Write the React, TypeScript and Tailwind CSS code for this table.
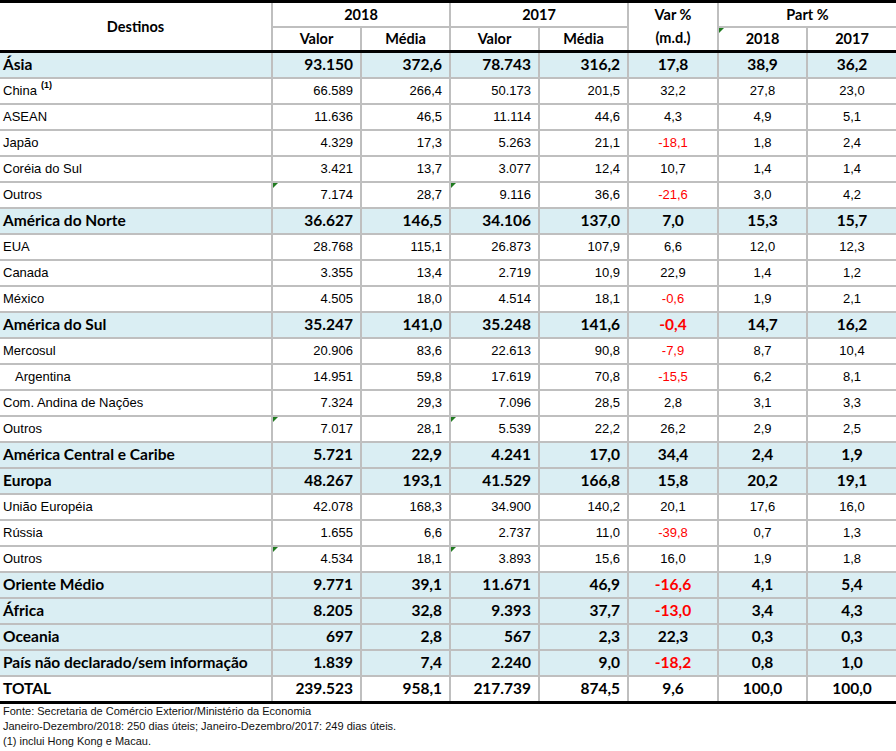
import React from 'react';

type Kind = 'group' | 'item' | 'sub' | 'total';
type Row = { label: string; kind: Kind; cells: string[]; sup?: string; flags?: number[] };

const ROWS: Row[] = [
  { label: 'Ásia', kind: 'group', cells: ['93.150', '372,6', '78.743', '316,2', '17,8', '38,9', '36,2'] },
  { label: 'China', sup: '(1)', kind: 'item', cells: ['66.589', '266,4', '50.173', '201,5', '32,2', '27,8', '23,0'] },
  { label: 'ASEAN', kind: 'item', cells: ['11.636', '46,5', '11.114', '44,6', '4,3', '4,9', '5,1'] },
  { label: 'Japão', kind: 'item', cells: ['4.329', '17,3', '5.263', '21,1', '-18,1', '1,8', '2,4'] },
  { label: 'Coréia do Sul', kind: 'item', cells: ['3.421', '13,7', '3.077', '12,4', '10,7', '1,4', '1,4'] },
  { label: 'Outros', kind: 'item', flags: [0, 2], cells: ['7.174', '28,7', '9.116', '36,6', '-21,6', '3,0', '4,2'] },
  { label: 'América do Norte', kind: 'group', cells: ['36.627', '146,5', '34.106', '137,0', '7,0', '15,3', '15,7'] },
  { label: 'EUA', kind: 'item', cells: ['28.768', '115,1', '26.873', '107,9', '6,6', '12,0', '12,3'] },
  { label: 'Canada', kind: 'item', cells: ['3.355', '13,4', '2.719', '10,9', '22,9', '1,4', '1,2'] },
  { label: 'México', kind: 'item', cells: ['4.505', '18,0', '4.514', '18,1', '-0,6', '1,9', '2,1'] },
  { label: 'América do Sul', kind: 'group', cells: ['35.247', '141,0', '35.248', '141,6', '-0,4', '14,7', '16,2'] },
  { label: 'Mercosul', kind: 'item', cells: ['20.906', '83,6', '22.613', '90,8', '-7,9', '8,7', '10,4'] },
  { label: 'Argentina', kind: 'sub', cells: ['14.951', '59,8', '17.619', '70,8', '-15,5', '6,2', '8,1'] },
  { label: 'Com. Andina de Nações', kind: 'item', cells: ['7.324', '29,3', '7.096', '28,5', '2,8', '3,1', '3,3'] },
  { label: 'Outros', kind: 'item', flags: [0, 2], cells: ['7.017', '28,1', '5.539', '22,2', '26,2', '2,9', '2,5'] },
  { label: 'América Central e Caribe', kind: 'group', cells: ['5.721', '22,9', '4.241', '17,0', '34,4', '2,4', '1,9'] },
  { label: 'Europa', kind: 'group', cells: ['48.267', '193,1', '41.529', '166,8', '15,8', '20,2', '19,1'] },
  { label: 'União Européia', kind: 'item', cells: ['42.078', '168,3', '34.900', '140,2', '20,1', '17,6', '16,0'] },
  { label: 'Rússia', kind: 'item', cells: ['1.655', '6,6', '2.737', '11,0', '-39,8', '0,7', '1,3'] },
  { label: 'Outros', kind: 'item', flags: [0, 2], cells: ['4.534', '18,1', '3.893', '15,6', '16,0', '1,9', '1,8'] },
  { label: 'Oriente Médio', kind: 'group', cells: ['9.771', '39,1', '11.671', '46,9', '-16,6', '4,1', '5,4'] },
  { label: 'África', kind: 'group', cells: ['8.205', '32,8', '9.393', '37,7', '-13,0', '3,4', '4,3'] },
  { label: 'Oceania', kind: 'group', cells: ['697', '2,8', '567', '2,3', '22,3', '0,3', '0,3'] },
  { label: 'País não declarado/sem informação', kind: 'group', cells: ['1.839', '7,4', '2.240', '9,0', '-18,2', '0,8', '1,0'] },
  { label: 'TOTAL', kind: 'total', cells: ['239.523', '958,1', '217.739', '874,5', '9,6', '100,0', '100,0'] },
];

const COLS = 'grid grid-cols-[271px_87px_87px_87px_87px_88px_87px_88px] gap-x-[2px]';
const HEAD = "[font-family:'Lato',sans-serif] font-bold text-[14.5px]";
const BOLD = "[font-family:'Lato',sans-serif] font-bold text-[15.5px]";
const PLAIN = "[font-family:'Liberation_Sans',Arial,sans-serif] text-[13px]";

function Flag() {
  return (
    <span className="absolute left-0 top-0 h-0 w-0 border-l-[5px] border-b-[5px] border-l-[#1f7a1f] border-b-transparent" />
  );
}

function DataRow({ row }: { row: Row }) {
  const bold = row.kind === 'group' || row.kind === 'total';
  const bg = row.kind === 'group' ? 'bg-[#daeef3]' : 'bg-white';
  const font = bold ? BOLD : PLAIN;
  return (
    <div className={`${COLS} h-[24px]`}>
      <div className={`${bg} ${font} flex items-center text-black ${row.kind === 'sub' ? 'pl-[15px]' : 'pl-[3px]'}`}>
        {row.label}
        {row.sup ? (
          <span className="relative top-[-5px] ml-[4px] text-[9px] font-bold [font-family:'Liberation_Sans',Arial,sans-serif]">
            {row.sup}
          </span>
        ) : null}
      </div>
      {row.cells.map((c, i) => (
        <div
          key={i}
          className={`relative ${bg} ${font} flex items-center ${
            i < 4 ? 'justify-end pr-[7px]' : 'justify-center'
          } ${c.startsWith('-') ? 'text-[#ff0000]' : 'text-black'}`}
        >
          {row.flags?.includes(i) ? <Flag /> : null}
          {c}
        </div>
      ))}
    </div>
  );
}

export default function App() {
  const head = `bg-white ${HEAD} flex items-center justify-center text-black`;
  return (
    <div className="w-[896px] h-[751px] overflow-hidden bg-white">
      <div className="h-[3px] bg-black" />
      <div className={`${COLS} gap-y-[2px] grid-rows-[23px_22px] bg-[#bfbfbf]`}>
        <div className={`${head} row-span-2`}>Destinos</div>
        <div className={`${head} col-span-2`}>2018</div>
        <div className={`${head} col-span-2`}>2017</div>
        <div className={`bg-white ${HEAD} row-span-2 flex flex-col items-center text-black`}>
          <div className="flex h-[23px] items-center">Var %</div>
          <div className="flex flex-1 items-center">(m.d.)</div>
        </div>
        <div className={`${head} col-span-2`}>Part %</div>
        <div className={head}>Valor</div>
        <div className={head}>Média</div>
        <div className={head}>Valor</div>
        <div className={head}>Média</div>
        <div className={`relative ${head}`}>
          <Flag />
          2018
        </div>
        <div className={head}>2017</div>
      </div>
      <div className="h-[3px] bg-black" />
      <div className="flex flex-col gap-y-[2px] bg-[#bfbfbf]">
        {ROWS.map((r, i) => (
          <DataRow key={i} row={r} />
        ))}
      </div>
      <div className="h-[3px] bg-black" />
      <div className="pl-[3px] text-[11px] leading-[15px] text-[#111] [font-family:'Liberation_Sans',Arial,sans-serif]">
        <div>Fonte: Secretaria de Comércio Exterior/Ministério da Economia</div>
        <div>Janeiro-Dezembro/2018: 250 dias úteis; Janeiro-Dezembro/2017: 249 dias úteis.</div>
        <div>(1) inclui Hong Kong e Macau.</div>
      </div>
    </div>
  );
}
